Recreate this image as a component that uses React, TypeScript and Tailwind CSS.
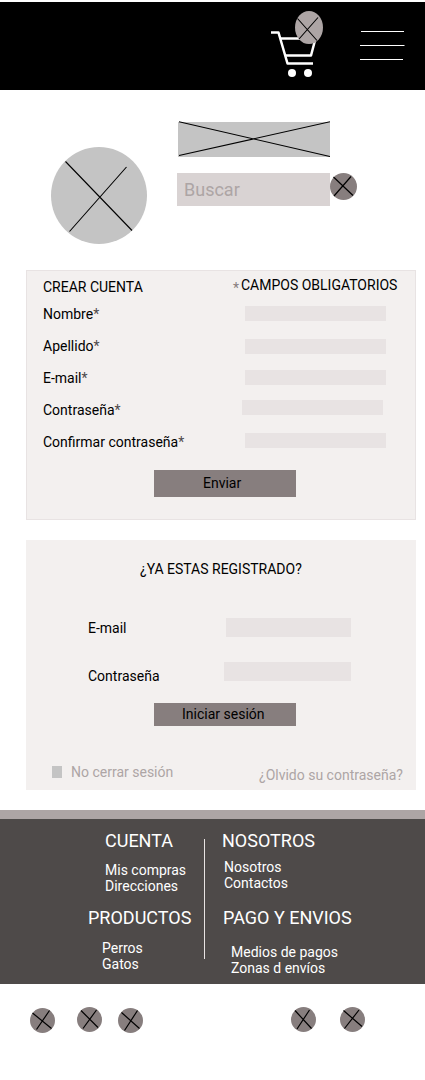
import React from "react";

function CartIcon() {
  return (
    <svg width="54" height="70" viewBox="0 0 54 70" fill="none" aria-label="Carrito">
      <path d="M1 22.5H8.5L17.5 53.5H43" stroke="#fff" strokeWidth="2.5" strokeLinejoin="round" />
      <path d="M10.5 28.5H45.5L41 45.5H15.5" stroke="#fff" strokeWidth="2.5" strokeLinejoin="round" />
      <circle cx="22" cy="63" r="4" fill="#fff" />
      <circle cx="38" cy="63" r="4" fill="#fff" />
      <ellipse cx="39" cy="17.5" rx="14" ry="16.5" fill="#ada5a5" />
      <path d="M27.5 8.5L47 30.5M29 29L48 7.5" stroke="#000" strokeWidth="1.1" />
    </svg>
  );
}

function MenuIcon() {
  return (
    <svg width="45" height="31" viewBox="0 0 45 31" aria-label="Menú">
      <path d="M1 1.5H44M0 15.5H44.5M0 29.5H43" stroke="#fff" strokeWidth="1" />
    </svg>
  );
}

function Dot({ lines, size = 25 }: { lines: string; size?: number }) {
  return (
    <svg width={size} height={size} viewBox={`0 0 ${size} ${size}`} className="shrink-0">
      <circle cx={size / 2} cy={size / 2} r={size / 2} fill="#877e7e" />
      <path d={lines} stroke="#000" strokeWidth="1.2" />
    </svg>
  );
}

function Row({ label, field }: { label: string; field: string }) {
  return (
    <label className="flex h-8 items-start justify-between">
      <span className="text-black">
        {label}
        <span className="text-[#4e4a4a]">*</span>
      </span>
      <span className={`h-[15px] w-[141px] bg-[#e8e3e3] ${field}`} />
    </label>
  );
}

function Links({ title, items, className, list }: { title: string; items: string[]; className: string; list: string }) {
  return (
    <div className={className}>
      <h3 className="text-[18px] leading-[21px]">{title}</h3>
      <ul className={list}>
        {items.map((item) => (
          <li key={item}>{item}</li>
        ))}
      </ul>
    </div>
  );
}

export default function App() {
  return (
    <div className="h-[1080px] w-[425px] overflow-hidden bg-white pt-0.5 font-['Roboto',sans-serif] text-[14px] leading-4 whitespace-nowrap text-black">
      <header className="flex h-[88px] justify-end bg-black pt-[8px] pr-5">
        <CartIcon />
        <div className="ml-9 pt-5">
          <MenuIcon />
        </div>
      </header>

      <div className="flex h-[180px] pl-[51px]">
        <svg width="96" height="97" viewBox="0 0 96 97" className="mt-[57px]">
          <ellipse cx="48" cy="48.5" rx="48" ry="48.5" fill="#c4c4c4" />
          <path d="M14.5 14.5L81 83.5M18.5 84.5L75.5 20" stroke="#000" strokeWidth="1.1" />
        </svg>
        <div className="ml-[30px] pt-[31px]">
          <svg width="153" height="36" viewBox="0 0 153 36" className="block">
            <path d="M1 1H153V36H1Z" fill="#c4c4c4" />
            <path d="M2 0.8L153 35.5M2 34.5L153 0.8" stroke="#000" strokeWidth="1.1" />
          </svg>
          <div className="mt-4 flex">
            <div className="h-[33px] w-[153px] bg-[#d9d3d3] pt-[6px] pl-[7px] text-[18px] leading-[21px] text-[#ada5a5]">Buscar</div>
            <Dot size={27} lines="M3.5 4L23 22.5M4 23L21 3.5" />
          </div>
        </div>
      </div>

      <main className="flex flex-col gap-5 pl-[26px]">
        <section className="h-[250px] w-[390px] border border-[#e8e3e3] bg-[#f3f0ef] pt-[6px] pl-4">
          <div className="flex h-[29px]">
            <h2 className="w-[190px] pt-0.5">CREAR CUENTA</h2>
            <span className="w-2 pt-[3px] text-[#877e7e]">*</span>
            <span>CAMPOS OBLIGATORIOS</span>
          </div>
          <div className="w-[343px]">
            <Row label="Nombre" field="mt-0" />
            <Row label="Apellido" field="mt-px" />
            <Row label="E-mail" field="mt-0" />
            <Row label="Contraseña" field="-mt-0.5 mr-[3px]" />
            <Row label="Confirmar contraseña" field="-mt-px" />
          </div>
          <button className="mt-1 ml-[111px] flex h-[27px] w-[142px] bg-[#877e7e] pt-[5px] pl-[49px]">Enviar</button>
        </section>

        <section className="h-[250px] w-[390px] bg-[#f3f0ef] pt-[21px]">
          <h2 className="pl-[114px]">¿YA ESTAS REGISTRADO?</h2>
          <label className="mt-[41px] flex h-[44px] pl-[62px]">
            <span className="w-[138px] pt-0.5">E-mail</span>
            <span className="h-[19px] w-[125px] bg-[#e8e3e3]" />
          </label>
          <label className="flex h-[41px] pl-[62px]">
            <span className="w-[136px] pt-[6px]">Contraseña</span>
            <span className="h-[19px] w-[127px] bg-[#e8e3e3]" />
          </label>
          <button className="ml-32 flex h-[23px] w-[142px] bg-[#877e7e] pt-[3px] pl-7">Iniciar sesión</button>
          <div className="mt-[38px] flex pl-[26px] text-[#ada5a5]">
            <span className="mt-0.5 h-3 w-2.5 bg-[#c4c4c4]" />
            <span className="ml-[9px] w-[188px]">No cerrar sesión</span>
            <span className="pt-[3px]">¿Olvido su contraseña?</span>
          </div>
        </section>
      </main>

      <footer className="mt-5">
        <div className="flex h-[174px] border-t-[9px] border-[#ada5a5] bg-[#4e4a49] pt-[11px] text-white">
          <div className="w-[204px]">
            <Links title="CUENTA" items={["Mis compras", "Direcciones"]} className="h-[77px] pl-[105px]" list="mt-[11px]" />
            <Links title="PRODUCTOS" items={["Perros", "Gatos"]} className="pl-[88px]" list="mt-3 pl-[14px]" />
          </div>
          <div className="mt-[9px] h-[120px] w-px bg-[#e8e3e3]" />
          <div className="pl-[17px]">
            <Links title="NOSOTROS" items={["Nosotros", "Contactos"]} className="h-[77px]" list="mt-2 pl-0.5" />
            <Links title="PAGO Y ENVIOS" items={["Medios de pagos", "Zonas d envíos"]} className="pl-px" list="mt-4 pl-2" />
          </div>
        </div>
        <div className="flex items-start pt-[23px] pl-[30px]">
          <div className="mt-px flex">
            <Dot lines="M2.5 5L21.5 20.5M6.5 21.5L19.5 2.5" />
          </div>
          <div className="ml-[22px] flex">
            <Dot lines="M4 3.5L21 20.5M6 21.5L19.5 3" />
          </div>
          <div className="mt-px ml-4 flex">
            <Dot lines="M3.5 4.5L21.5 20.5M6.5 22.5L19.5 2.5" />
          </div>
          <div className="ml-[148px] flex">
            <Dot lines="M4 3.5L20.5 21.5M6 22L18.5 3" />
          </div>
          <div className="ml-6 flex">
            <Dot lines="M3.5 3.5L22 19.5M4.5 21.5L19 3" />
          </div>
        </div>
      </footer>
    </div>
  );
}
